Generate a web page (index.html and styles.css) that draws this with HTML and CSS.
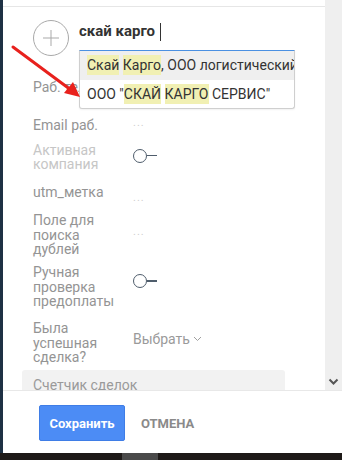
FILE: index.html
```html
<!DOCTYPE html>
<html lang="ru">
<head>
<meta charset="utf-8">
<link rel="stylesheet" href="styles.css">
</head>
<body>
<div class="app">
  <div class="main">
    <div class="edge"></div>
    <div class="panel">
      <div class="topline"></div>
      <div class="head">
        <div class="avatar">
          <svg width="38" height="38" viewBox="0 0 38 38"><circle cx="19" cy="19" r="17.5" fill="none" stroke="#a9a9a9" stroke-width="1"/><path d="M19 11v16M11 19h16" stroke="#a9a9a9" stroke-width="1"/></svg>
        </div>
        <div class="search">
          <div class="query">скай карго<span class="caret"></span></div>
          <div class="suggest">
            <div class="opt opt-active"><span class="hl">Скай</span> <span class="hl">Карго</span>, ООО логистический центр</div>
            <div class="opt">ООО "<span class="hl">СКАЙ</span> <span class="hl">КАРГО</span> СЕРВИС"</div>
          </div>
        </div>
      </div>
      <div class="form">
        <div class="row r-phone"><div class="lbl">Раб. тел.</div><div class="val"><span class="dots">...</span></div></div>
        <div class="row r-email"><div class="lbl">Email раб.</div><div class="val"><span class="dots">...</span></div></div>
        <div class="row r-active mid"><div class="lbl dim">Активная<br>компания</div><div class="val lift-s"><span class="toggle"></span></div></div>
        <div class="row r-utm"><div class="lbl">utm_метка</div><div class="val low"><span class="dots">...</span></div></div>
        <div class="row r-dup mid"><div class="lbl">Поле для<br>поиска<br>дублей</div><div class="val"><span class="dots">...</span></div></div>
        <div class="row r-pay"><div class="lbl">Ручная<br>проверка<br>предоплаты</div><div class="val up"><span class="toggle"></span></div></div>
        <div class="row r-deal mid"><div class="lbl">Была<br>успешная<br>сделка?</div><div class="val lift"><span class="select">Выбрать <svg width="9" height="6" viewBox="0 0 9 6"><path d="M1 1l3.5 3.5L8 1" fill="none" stroke="#a0a0a0" stroke-width="1"/></svg></span></div></div>
        <div class="counter">Счетчик сделок</div>
      </div>
      <svg class="arrow" width="90" height="110" viewBox="0 0 90 110"><line x1="13" y1="47" x2="71" y2="90" stroke="#e8211d" stroke-width="3" stroke-linecap="round"/><polygon points="80,97 64,93 73,82" fill="#e8211d"/></svg>
    </div>
    <div class="sidebar"><svg width="11" height="7" viewBox="0 0 11 7"><path d="M1.5 1.5l4 4 4-4" fill="none" stroke="#555" stroke-width="2"/></svg></div>
  </div>
  <div class="footer">
    <div class="edge"></div>
    <div class="actions">
      <button class="btn-save">Сохранить</button>
      <span class="btn-cancel">ОТМЕНА</span>
    </div>
  </div>
  <div class="taskbar"><div class="thumb"></div></div>
</div>
</body>
</html>
```
FILE: styles.css
```css
html, body {
  margin: 0;
  padding: 0;
}
body {
  width: 342px;
  height: 460px;
  overflow: hidden;
  font-family: Roboto, "Noto Sans", sans-serif;
  background: #1e1a18;
}
.app {
  display: flex;
  flex-direction: column;
  height: 460px;
}
.main {
  display: flex;
  height: 390px;
  overflow: hidden;
}
.edge {
  width: 3px;
  flex: none;
  background: #1e3144;
}
.panel {
  position: relative;
  flex: 1;
  background: #fff;
  overflow: hidden;
}
.topline {
  height: 6px;
  border-bottom: 1px solid #e6e6e6;
}
.sidebar {
  width: 17px;
  flex: none;
  background: #efefef;
  display: flex;
  align-items: flex-end;
  justify-content: center;
  padding-bottom: 5px;
  box-sizing: border-box;
}
.head {
  display: flex;
  align-items: flex-start;
  padding: 12px 0 0 29px;
  height: 73px;
  box-sizing: border-box;
  position: relative;
  z-index: 2;
}
.avatar {
  width: 38px;
  height: 38px;
  flex: none;
}
.avatar svg { display: block; }
.search {
  margin-left: 9px;
  width: 216px;
}
.query {
  font-weight: 700;
  font-size: 15px;
  color: #333;
  height: 31px;
  line-height: 22px;
  padding-top: 1px;
  box-sizing: border-box;
  display: flex;
  align-items: flex-start;
}
.caret {
  display: inline-block;
  width: 1px;
  height: 18px;
  background: #333;
  margin-left: 5px;
  margin-top: 3px;
}
.suggest {
  border: 1px solid #cfcfcf;
  border-top: 1px solid #4a90e2;
  border-radius: 0 0 3px 3px;
  background: #fff;
  overflow: hidden;
  white-space: nowrap;
  box-shadow: 0 1px 2px rgba(0,0,0,0.06);
}
.opt {
  height: 28px;
  line-height: 28px;
  padding-left: 7px;
  font-size: 14px;
  color: #333;
  overflow: hidden;
}
.opt-active {
  background: #efefef;
  height: 29px;
}
.hl {
  background: #f1f0b3;
  padding: 2px 0;
}
.form {
  position: relative;
  z-index: 1;
}
.row {
  display: flex;
  align-items: flex-start;
  padding-left: 30px;
  box-sizing: border-box;
}
.row.mid { align-items: center; }
.lbl {
  width: 100px;
  flex: none;
  font-size: 14px;
  line-height: 14.5px;
  color: #949494;
}
.lbl.dim { color: #c6c6c6; }
.val {
  font-size: 14px;
  line-height: 15px;
  color: #999;
}
.val.low { margin-top: 8px; }
.val.up { margin-top: 8px; align-self: flex-start; }
.val.lift { margin-bottom: 8px; }
.val.lift-s { margin-bottom: 3px; }
.dots {
  position: relative;
  top: -4px;
  color: #cfcfcf;
  font-size: 11px;
  letter-spacing: 1px;
}
.toggle {
  display: inline-block;
  position: relative;
  width: 12px;
  height: 12px;
  border: 1.3px solid #4f5d6c;
  border-radius: 50%;
  vertical-align: middle;
}
.toggle::after {
  content: "";
  position: absolute;
  left: 13px;
  top: 5px;
  width: 10px;
  height: 1.3px;
  background: #4f5d6c;
}
.r-phone { height: 38px; }
.r-email { height: 24px; }
.r-active { height: 30px; margin-bottom: 13px; }
.r-utm { height: 28px; }
.r-dup { height: 44px; margin-bottom: 8px; }
.r-pay { height: 56px; }
.r-deal { height: 44px; margin-bottom: 5px; }
.select {
  color: #9a9a9a;
  display: inline-flex;
  align-items: center;
  gap: 3px;
}
.counter {
  margin-left: 19px;
  width: 263px;
  height: 30px;
  background: #f2f2f2;
  border-radius: 3px;
  font-size: 14px;
  color: #9a9a9a;
  padding: 7px 0 0 11px;
  box-sizing: border-box;
}
.arrow {
  position: absolute;
  left: -3px;
  top: 0;
  z-index: 3;
}
.footer {
  display: flex;
  height: 63px;
  background: #fff;
}
.actions {
  flex: 1;
  border-top: 1px solid #e8e8e8;
  display: flex;
  align-items: center;
  padding-left: 36px;
  gap: 16px;
}
.btn-save {
  width: 86px;
  height: 36px;
  background: #4c8cf5;
  border: 1px solid #3f7de6;
  border-radius: 2px;
  color: #fff;
  font-family: Roboto, sans-serif;
  font-weight: 700;
  font-size: 13px;
  padding: 0;
  margin-top: 2px;
}
.btn-cancel {
  font-weight: 700;
  font-size: 13px;
  color: #8a8a8a;
  margin-top: 2px;
}
.taskbar {
  height: 7px;
  background: #1e1a18;
  position: relative;
}
.thumb {
  margin-left: 122px;
  width: 36px;
  height: 7px;
  background: #4a4a4a;
}
```
